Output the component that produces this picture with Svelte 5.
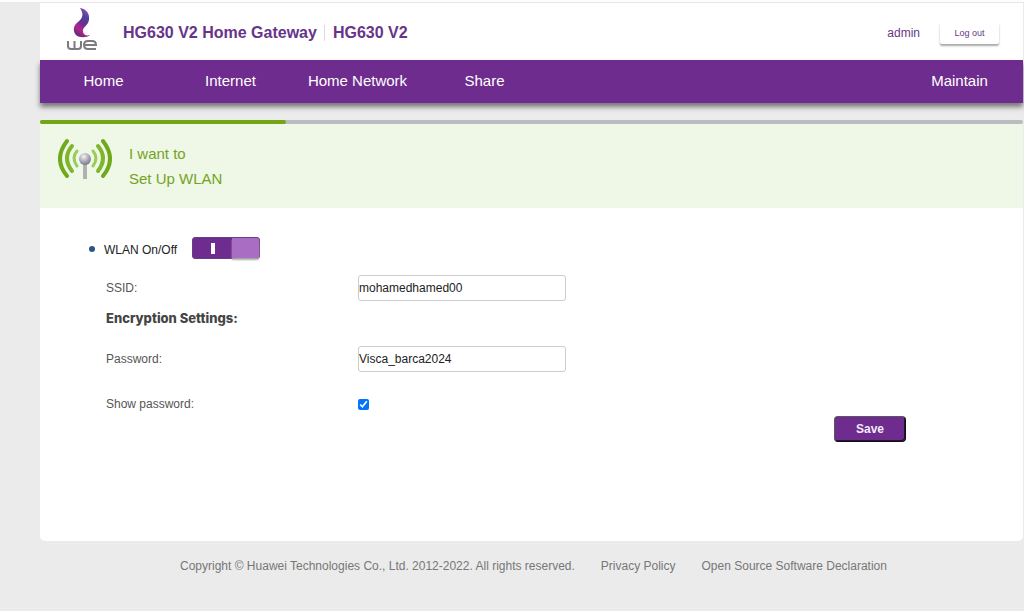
<script lang="ts">
    const menu = ["Home", "Internet", "Home Network", "Share"];

    let enabled = $state(true);
    let ssid = $state("mohamedhamed00");
    let password = $state("Visca_barca2024");
    let showPassword = $state(true);
</script>

<div class="page">
    <header>
        <svg class="logo" width="32" height="44" viewBox="0 0 32 44" aria-label="we">
            <defs>
                <linearGradient id="flame" x1="0.7" y1="0" x2="0.3" y2="1">
                    <stop offset="0" stop-color="#a04fae" />
                    <stop offset="0.25" stop-color="#4a45a0" />
                    <stop offset="0.5" stop-color="#6b2d91" />
                    <stop offset="0.75" stop-color="#b0258c" />
                    <stop offset="1" stop-color="#5a2a7c" />
                </linearGradient>
            </defs>
            <path fill="url(#flame)" d="M14 1C20 2 24 6 23 13C22 19 16 20 17 25C18 28 20 29 24 28C21 31 13 31 10 28C6 23 8 18 12 15C17 11 18 7 14 1Z" />
            <g fill="none" stroke="#7c7c80" stroke-width="2">
                <path d="M2 34V39Q2 42 5 42H12Q15 42 15 39V34M8.500 34V42" />
                <path d="M18 38H30Q30 34 26 34H22Q18 34 18 38Q18 42 22 42H30" />
            </g>
        </svg>
        <h1>HG630 V2 Home Gateway</h1>
        <span class="model">HG630 V2</span>
        <span class="user">admin</span>
        <button class="logout">Log out</button>
    </header>

    <nav>
        {#each menu as item}
            <a href="#{item}">{item}</a>
        {/each}
        <a class="maintain" href="#maintain">Maintain</a>
    </nav>

    <div class="progress"><div class="done"></div></div>

    <section class="banner">
        <svg width="54" height="42" viewBox="0 0 54 42" aria-hidden="true">
            <defs>
                <radialGradient id="ball" cx="0.4" cy="0.3" r="0.7">
                    <stop offset="0" stop-color="#f4f4f8" />
                    <stop offset="0.5" stop-color="#b4b5bf" />
                    <stop offset="1" stop-color="#777985" />
                </radialGradient>
            </defs>
            <g fill="none" stroke-linecap="round">
                <path stroke="#70a91b" stroke-width="4" d="M9 3Q-5 21 9 38M45 3Q59 21 45 38" />
                <path stroke="#7eb62e" stroke-width="4" d="M14 8Q4 20 14 33M40 8Q50 20 40 33" />
                <path stroke="#9bcb58" stroke-width="3" d="M19 13Q13 20 19 28M35 13Q41 20 35 28" />
            </g>
            <rect x="25" y="24" width="4" height="17" fill="#afb1b2" />
            <circle cx="27" cy="21" r="6" fill="url(#ball)" />
        </svg>
        <div>
            <p>I want to</p>
            <p>Set Up WLAN</p>
        </div>
    </section>

    <main>
        <div class="wlan">
            <i class="dot"></i>
            <span class="name">WLAN On/Off</span>
            <button class="switch" class:off={!enabled} role="switch" aria-checked={enabled} aria-label="WLAN On/Off" onclick={() => (enabled = !enabled)}>
                <span class="mark"></span>
                <span class="knob"></span>
            </button>
        </div>
        <form onsubmit={(e) => e.preventDefault()}>
            <div class="row">
                <label for="ssid">SSID:</label>
                <input id="ssid" type="text" bind:value={ssid} />
            </div>
            <h2>Encryption Settings:</h2>
            <div class="row">
                <label for="password">Password:</label>
                {#if showPassword}
                    <input id="password" type="text" bind:value={password} />
                {:else}
                    <input id="password" type="password" bind:value={password} />
                {/if}
            </div>
            <div class="row show">
                <label for="show">Show password:</label>
                <input id="show" type="checkbox" bind:checked={showPassword} />
            </div>
            <button class="save">Save</button>
        </form>
    </main>

    <footer>
        <span>Copyright © Huawei Technologies Co., Ltd. 2012-2022. All rights reserved.</span>
        <a href="#privacy">Privacy Policy</a>
        <a href="#opensource">Open Source Software Declaration</a>
    </footer>
</div>

<style>
    :global(body) {
        background: #ebebeb;
        border-top: 2px solid #fdfdfd;
        font-family: "Liberation Sans", Arial, sans-serif;
        font-size: 12px;
        color: #555555;
    }
    .page {
        padding: 0 1px 0 40px;
    }
    h1, h2, p {
        margin: 0;
    }
    a {
        color: inherit;
        text-decoration: none;
    }
    button {
        font-family: inherit;
        padding: 0;
        cursor: pointer;
    }
    header {
        display: flex;
        align-items: center;
        height: 58px;
        padding: 2px 24px 0 26px;
        background: #ffffff;
        border-top: 1px solid #e6e6e6;
        box-sizing: border-box;
        color: #6a3785;
    }
    .logo {
        align-self: flex-start;
        margin: 2px 25px 0 0;
    }
    h1, .model {
        font-size: 16px;
        font-weight: bold;
        line-height: 16px;
        color: #67348a;
    }
    h1 {
        padding-right: 7px;
        border-right: 1px solid #dddddd;
    }
    .model {
        padding-left: 8px;
    }
    .user {
        margin-left: auto;
    }
    .logout {
        width: 59px;
        height: 22px;
        margin-left: 20px;
        border: none;
        border-radius: 2px;
        background: #ffffff;
        box-shadow: 0 2px 2px #aaaaaa;
        font-size: 9px;
        color: #6a3785;
    }
    nav {
        display: flex;
        padding-bottom: 1px;
        background: #6e2c8e;
        box-shadow: 0 4px 5px #777777;
        color: #ffffff;
        font-size: 15px;
        line-height: 42px;
        text-align: center;
    }
    nav a {
        width: 127px;
    }
    nav a:hover {
        background: #7d3a9e;
    }
    .maintain {
        margin-left: auto;
    }
    .progress {
        height: 4px;
        margin-top: 17px;
        background: #babdc0;
        border-radius: 2px;
    }
    .done {
        width: 25%;
        height: 4px;
        background: #74a515;
        border-radius: 2px;
    }
    .banner {
        display: flex;
        gap: 17px;
        height: 84px;
        padding: 14px 18px;
        box-sizing: border-box;
        background: #eff8e6;
        color: #74a31f;
        font-size: 15px;
        line-height: 25px;
    }
    .banner p:first-child {
        margin-top: 3px;
    }
    main {
        min-height: 333px;
        padding: 28px 117px 0 49px;
        box-sizing: border-box;
        background: #ffffff;
        border-radius: 0 0 5px 5px;
    }
    .wlan {
        display: flex;
        align-items: center;
        height: 24px;
        color: #222222;
    }
    .dot {
        width: 6px;
        height: 6px;
        margin: 2px 9px 0 0;
        border-radius: 50%;
        background: #2b5585;
    }
    .name {
        padding-top: 3px;
    }
    .switch {
        display: flex;
        width: 68px;
        height: 22px;
        margin-left: 15px;
        border: 1px solid #664080;
        border-radius: 3px;
        background: #6e2c8e;
    }
    .switch.off {
        flex-direction: row-reverse;
        background: #999999;
    }
    .mark {
        width: 4px;
        height: 11px;
        margin: 5px auto;
        background: #ffffff;
    }
    .knob {
        width: 27px;
        height: 20px;
        border-radius: 0 2px 2px 0;
        background: #aa6dc4;
        box-shadow: 0 2px 2px #aaaaaa;
    }
    form {
        display: flex;
        flex-direction: column;
        padding: 15px 0 0 17px;
    }
    .row {
        display: flex;
        align-items: center;
    }
    .row label {
        width: 252px;
    }
    input[type="text"],
    input[type="password"] {
        width: 208px;
        height: 26px;
        padding: 0;
        border: 1px solid #cccccc;
        border-radius: 3px;
        box-sizing: border-box;
        font-family: inherit;
        font-size: 12px;
        color: #222222;
    }
    input[type="checkbox"] {
        width: 11px;
        height: 11px;
        margin: 0;
    }
    h2 {
        margin: 10px 0 20px;
        font-family: Inter, "Liberation Sans", sans-serif;
        font-size: 13px;
        line-height: 15px;
        font-weight: 800;
        color: #444444;
    }
    .show {
        height: 20px;
        margin-top: 22px;
    }
    .save {
        align-self: flex-end;
        width: 72px;
        height: 26px;
        margin-top: 2px;
        border: 1px solid;
        border-color: #5c5560 #111111 #111111 #5c5560;
        border-radius: 4px;
        box-shadow: inset -1px -1px 0 #2a1138;
        background: #6e2c8e;
        color: #f4eaf8;
        font-size: 12px;
        font-weight: bold;
    }
    footer {
        display: flex;
        padding: 18px 0 37px 140px;
        line-height: 15px;
        color: #777777;
    }
    footer a {
        margin-left: 26px;
    }
</style>
